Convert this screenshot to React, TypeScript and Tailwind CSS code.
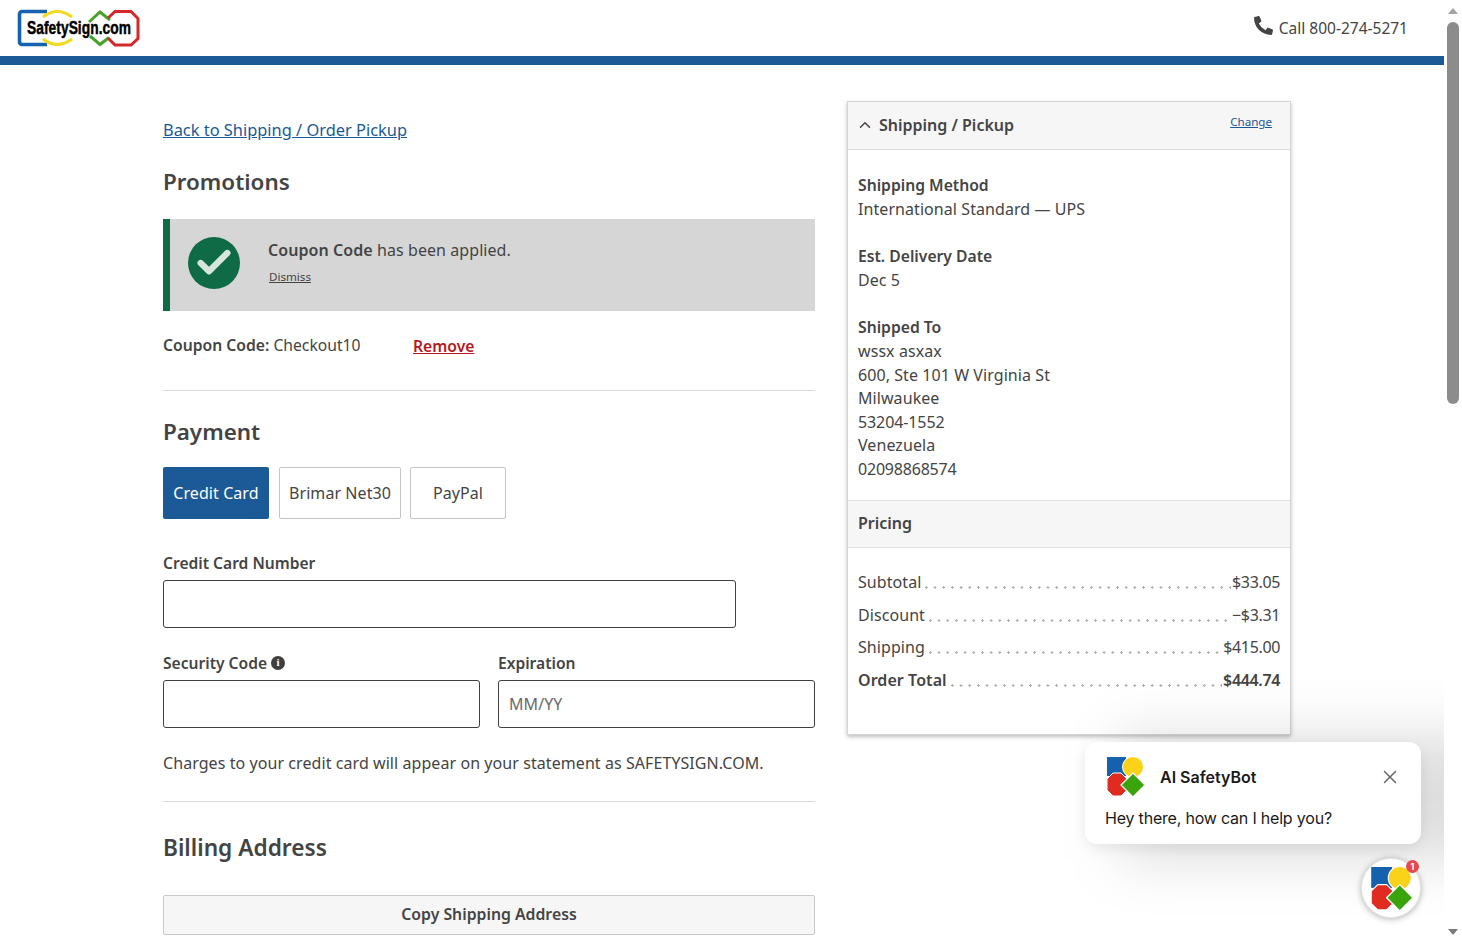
import React from "react";
import { ChevronUp, X, Check } from "lucide-react";
import { FaPhoneAlt } from "react-icons/fa";

function BotLogo({ size }: { size: number }) {
  return (
    <svg width={size} height={size} viewBox="0 0 40 40" aria-hidden="true">
      <rect x="2" y="0" width="19" height="19" fill="#1561ad" />
      <circle cx="28" cy="10" r="10.5" fill="#fbd21a" stroke="#fff" strokeWidth="1" />
      <polygon points="8,16 16,16 22,22 22,33 16,39 8,39 2,33 2,22" fill="#e02b20" stroke="#fff" strokeWidth="1" />
      <polygon points="28,16 40,28 28,40 16,28" fill="#3aa40d" stroke="#fff" strokeWidth="1.2" strokeLinejoin="round" />
    </svg>
  );
}

function SiteLogo() {
  return (
    <svg width="122" height="38" viewBox="0 0 122 38" aria-label="SafetySign.com" className="overflow-visible">
      <path d="M29 2.500H4a2.500 2.500 0 0 0-2.500 2.500v28a2.500 2.500 0 0 0 2.500 2.500h25" fill="none" stroke="#1462ad" strokeWidth="3.6" />
      <path d="M25 8Q39-3 54 8M25 30Q39 41 54 30" fill="none" stroke="#f4d91e" strokeWidth="3" />
      <path d="M71 13L82 3l10 8M72 27l10 8.500 9-7" fill="none" stroke="#46a32a" strokeWidth="3" />
      <path d="M90 9l7-6.500h16l7 7v20l-7 6.500H97l-7-7" fill="none" stroke="#d5282b" strokeWidth="3" />
      <text x="9" y="24.500" textLength="104" lengthAdjust="spacingAndGlyphs" fontFamily="'Liberation Sans Narrow', 'Liberation Sans', sans-serif" fontWeight="700" fontSize="18" fill="#000" stroke="#000" strokeWidth="0.45">SafetySign.com</text>
    </svg>
  );
}

function PriceRow({ label, value, bold, className }: { label: string; value: string; bold?: boolean; className: string }) {
  return (
    <div className={`flex items-baseline ${bold ? "font-semibold" : ""} ${className}`}>
      <span>{label}</span>
      <span className="mx-[1px] mb-[5px] h-[3px] flex-1 self-end bg-[radial-gradient(circle,#ababab_1px,transparent_1.2px)] bg-[length:8.7px_3px]" />
      <span className="tracking-[-0.35px]">{value}</span>
    </div>
  );
}

function Field({ label, placeholder, info, className }: { label: string; placeholder?: string; info?: boolean; className: string }) {
  return (
    <div className={className}>
      <div className="flex h-[24px] items-center gap-[4px] pt-[1px] text-[15.6px] font-semibold tracking-normal">
        {label}
        {info && (
          <span className="mb-[2px] flex h-[14px] w-[14px] items-center justify-center rounded-full bg-[#3f3f3f] font-['Liberation_Serif',serif] text-[11px] font-bold text-white">i</span>
        )}
      </div>
      <input
        placeholder={placeholder}
        className="mt-[5px] block h-[48px] w-full rounded-[3px] border border-[#3f3f3f] bg-white px-[10px] text-[16px] placeholder:text-[#6a6a6a]"
      />
    </div>
  );
}

export default function App() {
  return (
    <div className="relative flex h-[942px] w-full overflow-hidden bg-white font-['Noto_Sans','Open_Sans',sans-serif] text-[16px] tracking-[0.07px] text-[#444444]">
      <div className="relative flex min-w-0 flex-1 flex-col overflow-hidden">
        <header className="flex h-[56px] shrink-0 items-center justify-between pl-[18px] pr-[36px]">
          <SiteLogo />
          <div className="flex items-center gap-[6px] text-[15.5px] tracking-normal">
            <FaPhoneAlt size={19} className="mb-[6px]" />
            <span className="mt-[2px]">Call 800-274-5271</span>
          </div>
        </header>
        <div className="h-[9px] shrink-0 bg-[#1b5a96]" />

        <main className="flex gap-[32px] pl-[163px]">
          <section className="w-[652px] shrink-0">
            <a className="mt-[53px] block h-[24px] text-[16.4px] leading-[24px] tracking-normal text-[#1b5a96] underline">Back to Shipping / Order Pickup</a>
            <h2 className="mt-[22px] h-[36px] text-[22.4px] font-semibold leading-[36px] tracking-normal">Promotions</h2>
            <div className="mt-[19px] flex h-[92px] items-center border-l-[7px] border-[#0f6b45] bg-[#d6d6d6] pb-[4px] pl-[18px]">
              <div className="flex h-[52px] w-[52px] items-center justify-center rounded-full bg-[#0f6b45]">
                <Check size={40} strokeWidth={3.8} className="text-[#d6e6dd]" />
              </div>
              <div className="ml-[28px] mb-[4px]">
                <div className="leading-[24px]"><b className="font-semibold">Coupon Code</b> has been applied.</div>
                <a className="mt-[7px] ml-[1px] block text-[11.6px] leading-[16px] tracking-normal underline">Dismiss</a>
              </div>
            </div>
            <div className="mt-[23px] flex h-[24px] items-center tracking-normal">
              <span className="w-[250px] text-[15.7px]"><b className="font-semibold">Coupon Code:</b> Checkout10</span>
              <a className="mt-[1px] text-[15.7px] font-semibold text-[#b51a20] underline">Remove</a>
            </div>
            <hr className="mt-[32px] border-[#d9d9d9]" />
            <h2 className="mt-[23px] h-[36px] text-[22.4px] font-semibold leading-[36px] tracking-normal">Payment</h2>
            <div className="mt-[17px] flex">
              <button className="h-[52px] w-[106px] rounded-[2px] bg-[#1b5a96] text-white">Credit Card</button>
              <button className="ml-[10px] h-[52px] w-[122px] rounded-[2px] border border-[#c4c4c4]">Brimar Net30</button>
              <button className="ml-[9px] h-[52px] w-[96px] rounded-[2px] border border-[#c4c4c4]">PayPal</button>
            </div>
            <Field label="Credit Card Number" className="mt-[32px] w-[573px]" />
            <div className="mt-[23px] flex gap-[18px]">
              <Field label="Security Code" info className="flex-1" />
              <Field label="Expiration" placeholder="MM/YY" className="flex-1" />
            </div>
            <p className="mt-[23px] leading-[24px]">Charges to your credit card will appear on your statement as SAFETYSIGN.COM.</p>
            <hr className="mt-[26px] border-[#d9d9d9]" />
            <h2 className="mt-[27px] h-[38px] text-[22.7px] font-semibold leading-[38px] tracking-normal">Billing Address</h2>
            <button className="mt-[28px] h-[40px] w-full rounded-[2px] border border-[#c9c9c9] bg-[#f6f6f6] text-[15.8px] font-semibold tracking-normal">Copy Shipping Address</button>
          </section>

          <aside className="mt-[36px] h-[634px] w-[444px] shrink-0 border border-[#d4d4d4] bg-white shadow-[0_2px_4px_rgba(0,0,0,0.25)]">
            <div className="flex h-[48px] items-center border-b border-[#dcdcdc] bg-[#f6f6f6] pl-[8px] pr-[18px]">
              <ChevronUp size={18} strokeWidth={2} className="mb-[1px]" />
              <span className="mb-[2px] ml-[5px] flex-1 font-semibold tracking-normal">Shipping / Pickup</span>
              <a className="mb-[8px] text-[11.6px] tracking-normal text-[#1b5a96] underline">Change</a>
            </div>
            <div className="h-[350px] px-[10px] pt-[24px] leading-[23.6px]">
              <div className="text-[15.7px] font-semibold tracking-normal">Shipping Method</div>
              <div>International Standard — UPS</div>
              <div className="mt-[24px] text-[15.7px] font-semibold tracking-normal">Est. Delivery Date</div>
              <div>Dec 5</div>
              <div className="mt-[24px] text-[15.7px] font-semibold tracking-normal">Shipped To</div>
              <div>wssx asxax</div>
              <div>600, Ste 101 W Virginia St</div>
              <div>Milwaukee</div>
              <div className="tracking-[-0.1px]">53204-1552</div>
              <div>Venezuela</div>
              <div className="tracking-[-0.2px]">02098868574</div>
            </div>
            <div className="flex h-[48px] items-center border-y border-[#e2e2e2] bg-[#f6f6f6] px-[10px] pb-[2px] font-semibold tracking-normal">Pricing</div>
            <div className="px-[10px] pt-[22px] leading-[24px]">
              <PriceRow label="Subtotal" value="$33.05" className="" />
              <PriceRow label="Discount" value="−$3.31" className="mt-[8.7px]" />
              <PriceRow label="Shipping" value="$415.00" className="mt-[8.7px]" />
              <PriceRow label="Order Total" value="$444.74" bold className="mt-[8.7px]" />
            </div>
          </aside>
        </main>

        <div className="absolute left-[1120px] top-[735px] h-[125px] w-[420px] bg-[rgba(0,0,0,0.13)] blur-[28px]" />
        <div className="absolute left-[1085px] top-[742px] w-[336px] rounded-[12px] bg-white px-[20px] pb-[14px] pt-[15px] font-['Inter',sans-serif] text-[#1a1a1a] shadow-[0_4px_14px_rgba(0,0,0,0.08)]">
          <div className="flex items-center">
            <BotLogo size={40} />
            <span className="ml-[15px] flex-1 text-[16px] font-semibold tracking-normal">AI SafetyBot</span>
            <X size={22} strokeWidth={1.6} className="text-[#666]" />
          </div>
          <div className="mt-[9px] text-[16px] leading-[24px] tracking-[-0.2px]">Hey there, how can I help you?</div>
        </div>
        <div className="absolute left-[1361px] top-[858px] flex h-[60px] w-[60px] items-center justify-center rounded-full border border-[#e8e8e8] bg-white shadow-[0_1px_6px_rgba(0,0,0,0.3)]">
          <span className="mt-[1px] block"><BotLogo size={44} /></span>
          <span className="absolute left-[44px] top-[1px] flex h-[13px] w-[13px] items-center justify-center rounded-full bg-[#e5484d] font-['Inter',sans-serif] text-[9px] font-bold leading-none text-white">1</span>
        </div>
      </div>

      <div className="relative w-[18px] shrink-0 bg-white">
        <div className="absolute left-[4px] top-[8px] h-0 w-0 border-x-[5px] border-b-[6px] border-x-transparent border-b-[#a3a3a3]" />
        <div className="absolute left-[3px] top-[22px] h-[382px] w-[12px] rounded-[6px] bg-[#8c8c8c]" />
        <div className="absolute bottom-[7px] left-[4px] h-0 w-0 border-x-[5px] border-t-[6px] border-x-transparent border-t-[#7a7a7a]" />
      </div>
    </div>
  );
}
